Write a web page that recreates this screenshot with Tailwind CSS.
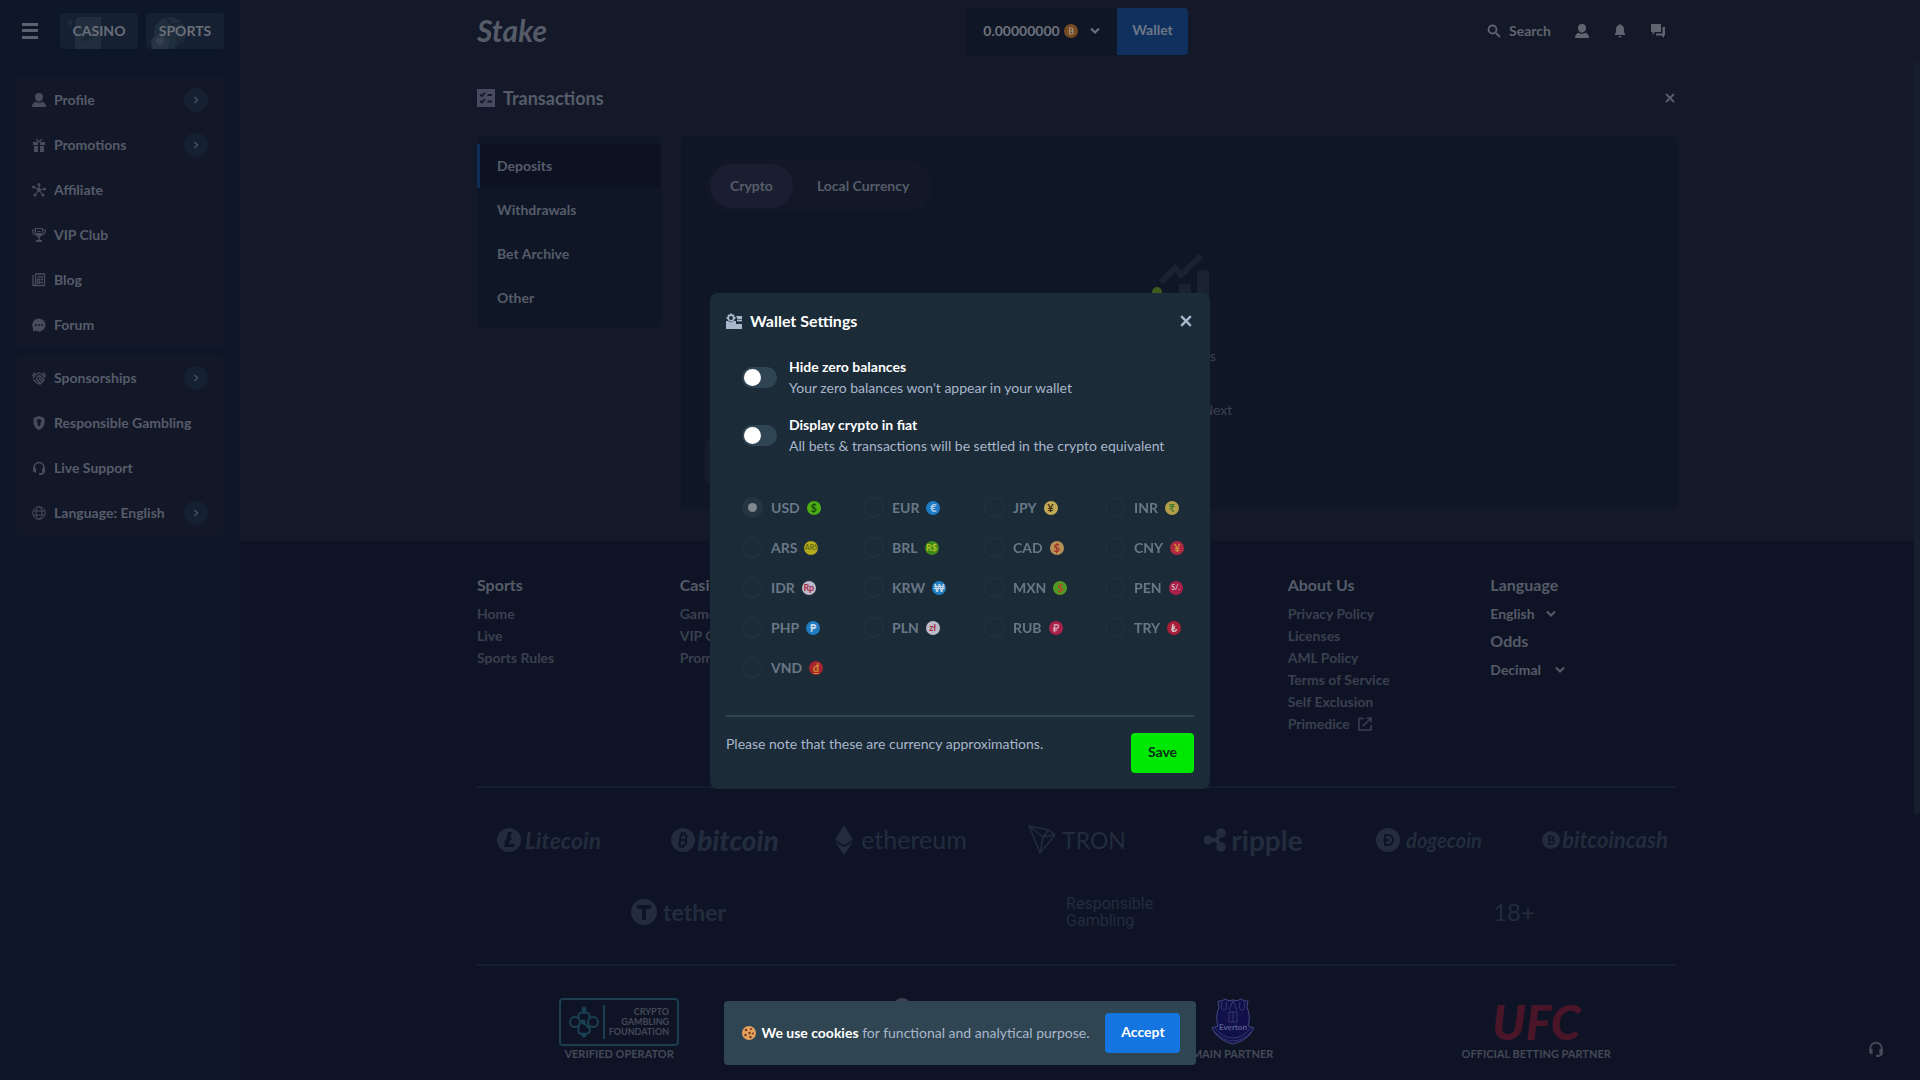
<!DOCTYPE html>
<html lang="en">
<head>
<meta charset="utf-8">
<title>Transactions - Stake</title>
<script src="https://cdn.jsdelivr.net/npm/@tailwindcss/browser@4"></script>
</head>
<body class="h-screen overflow-hidden bg-[#0e1728] font-['Lato',sans-serif] text-sm text-[#565c69]">

<svg class="hidden" aria-hidden="true">
  <symbol id="user" viewBox="0 0 14 14"><path fill="currentColor" d="M7 0a4 4 0 0 1 4 4c0 2-1 4.500-4 4.500S3 6 3 4a4 4 0 0 1 4-4zM0 14c0-3 1.500-4.500 3.500-5.200C5.500 10 8.500 10 10.500 8.800 12.500 9.500 14 11 14 14z"/></symbol>
  <symbol id="chev-r" viewBox="0 0 8 8"><path fill="none" stroke="currentColor" stroke-width="1.500" d="M2.500 1l3 3-3 3"/></symbol>
  <symbol id="chev-d" viewBox="0 0 10 8"><path fill="none" stroke="currentColor" stroke-width="2" d="M1 1.500l4 4 4-4"/></symbol>
  <symbol id="headset" viewBox="0 0 14 14"><path fill="none" stroke="currentColor" stroke-width="1.600" d="M2 9V6.500a5 5 0 0 1 10 0V11c0 1.500-1 2-3.500 2"/><path fill="currentColor" d="M1 7h3v4.500H2.500L1 10zM10 7h3v4l-1.500.500H10zM7 12h3v2H7z"/></symbol>
  <symbol id="cross" viewBox="0 0 10 10"><path fill="none" stroke="currentColor" stroke-width="2" d="M1 1l8 8M9 1L1 9"/></symbol>
</svg>

<div class="flex min-h-screen">
  <aside class="w-60 shrink-0 bg-[#0e1728]">
    <div class="flex h-[61px] items-center gap-2 pl-[22px]">
      <button aria-label="Menu" class="mr-3.5 flex h-4 w-4 flex-col justify-between text-[#5c616e]">
        <span class="h-[3px] w-full bg-current"></span><span class="h-[3px] w-full bg-current"></span><span class="h-[3px] w-full bg-current"></span>
      </button>
      <a href="#" class="relative flex h-9 w-[78px] items-center justify-center overflow-hidden rounded bg-[#152132] font-bold text-[#6a6e79]">
        <svg class="absolute inset-0" width="78" height="36" viewBox="0 0 78 36" aria-hidden="true"><path fill="#222e3e" d="M17 4h24v32H15V10z"/><path fill="#1a2737" d="M22 25c3-4 8-4 11 0l-3 3h-6z"/><path stroke="#253141" stroke-width="1.500" d="M8 8l2 5M12 7l-1 4"/></svg>
        <span class="relative">CASINO</span></a>
      <a href="#" class="relative flex h-9 w-[78px] items-center justify-center overflow-hidden rounded bg-[#152132] font-bold text-[#6a6e79]">
        <svg class="absolute inset-0" width="78" height="36" viewBox="0 0 78 36" aria-hidden="true"><circle cx="24" cy="20" r="16" fill="#202d3d"/><circle cx="14" cy="30" r="9" fill="#283443"/><circle cx="14" cy="28" r="4" fill="#364150"/><path fill="none" stroke="#162333" stroke-width="1.500" d="M20 5l6 7 9-2M30 24l8 12M38 25l-9 10"/></svg>
        <span class="relative">SPORTS</span></a>
    </div>
    <nav class="mt-4 flex flex-col gap-2 px-4 font-bold [&_svg]:text-[#464c5a]">
      <ul class="rounded bg-[#121828] px-4">
        <li><a href="#" class="flex h-[45px] items-center gap-2"><svg class="h-3.5 w-3.5"><use href="#user"/></svg>Profile<span class="ml-auto flex h-6 w-6 items-center justify-center rounded-full bg-[#152131]"><svg class="h-2 w-2"><use href="#chev-r"/></svg></span></a></li>
        <li><a href="#" class="flex h-[45px] items-center gap-2"><svg class="h-3.5 w-3.5" viewBox="0 0 14 14"><path fill="currentColor" d="M1 4h5v3H1zM8 4h5v3H8zM2 8h4v6H2zM8 8h4v6H8z"/><path fill="none" stroke="currentColor" stroke-width="1.300" d="M7 4L4 1M7 4l3-3"/></svg>Promotions<span class="ml-auto flex h-6 w-6 items-center justify-center rounded-full bg-[#152131]"><svg class="h-2 w-2"><use href="#chev-r"/></svg></span></a></li>
        <li><a href="#" class="flex h-[45px] items-center gap-2"><svg class="h-3.5 w-3.5" viewBox="0 0 14 14"><path stroke="currentColor" stroke-width="1.200" d="M7 7V2M7 7l5-1M7 7l4 5M7 7l-4 5M7 7L2 4"/><g fill="currentColor"><circle cx="7" cy="7" r="2"/><circle cx="7" cy="1.500" r="1.500"/><circle cx="12.500" cy="6" r="1.500"/><circle cx="11" cy="12" r="1.500"/><circle cx="3" cy="12" r="1.500"/><circle cx="1.500" cy="4" r="1.500"/></g></svg>Affiliate</a></li>
        <li><a href="#" class="flex h-[45px] items-center gap-2"><svg class="h-3.5 w-3.5" viewBox="0 0 14 14"><path fill="none" stroke="currentColor" stroke-width="1.200" d="M3 2H.700c0 3 1 4.500 3.300 5M11 2h2.300c0 3-1 4.500-3.300 5M5.500 3.500h3"/><path fill="currentColor" d="M3 0h8v1H3zM3.500 5l7 0C10 7.500 9 9 7.700 9.200V12H10v2H4v-2h2.300V9.200C5 9 4 7.500 3.500 5z"/><path fill="none" stroke="currentColor" d="M3.500 1v4M10.500 1v4"/></svg>VIP Club</a></li>
        <li><a href="#" class="flex h-[45px] items-center gap-2"><svg class="h-3.5 w-3.5" viewBox="0 0 14 14"><path fill="none" stroke="currentColor" stroke-width="1.300" d="M3.500 1h9v11.500h-9zM1 2v10.500h3M5.500 4H11M5.500 6.500h2.200v3.500H5.500zM9 6.500h2M9 9.500h2"/></svg>Blog</a></li>
        <li><a href="#" class="flex h-[45px] items-center gap-2"><svg class="h-3.5 w-3.5" viewBox="0 0 14 14"><path fill="currentColor" d="M7 .500a6.500 6.500 0 1 1-3 12.300L1 13.500V10A6.500 6.500 0 0 1 7 .500z"/><g fill="#121828"><circle cx="4" cy="7" r="1"/><circle cx="7" cy="7" r="1"/><circle cx="10" cy="7" r="1"/></g></svg>Forum</a></li>
      </ul>
      <ul class="rounded bg-[#121828] px-4">
        <li><a href="#" class="flex h-[45px] items-center gap-2"><svg class="h-3.5 w-3.5" viewBox="0 0 14 14"><path fill="none" stroke="currentColor" stroke-width="1.300" d="M.500 5L3 1.500M13.500 5L11 1.500M4 3.500l3-1.500 3 1.500 3 3.500M1 7l3-3.500M1.500 8.500l4 4M4 7.500l4 4.500M6.500 6.500l3.500 4M4.500 6.500L7 4.500l2 1.500 3 3-4 4.200-2-.700"/></svg>Sponsorships<span class="ml-auto flex h-6 w-6 items-center justify-center rounded-full bg-[#152131]"><svg class="h-2 w-2"><use href="#chev-r"/></svg></span></a></li>
        <li><a href="#" class="flex h-[45px] items-center gap-2"><svg class="h-3.5 w-3.5" viewBox="0 0 14 14"><path fill="currentColor" fill-rule="evenodd" d="M7 0l5.500 2v4c0 4-2.500 7-5.500 8C4 13 1.500 10 1.500 6V2zM7 3a2.300 2.300 0 0 0-1.200 4.300V10h2.400V7.300A2.300 2.300 0 0 0 7 3z"/></svg>Responsible Gambling</a></li>
        <li><a href="#" class="flex h-[45px] items-center gap-2"><svg class="h-3.5 w-3.5"><use href="#headset"/></svg>Live Support</a></li>
        <li><a href="#" class="flex h-[45px] items-center gap-2"><svg class="h-3.5 w-3.5" viewBox="0 0 14 14"><g fill="none" stroke="currentColor"><circle cx="7" cy="7" r="6.300"/><ellipse cx="7" cy="7" rx="3" ry="6.300"/><path d="M1 5h12M1 9h12"/></g></svg>Language: English<span class="ml-auto flex h-6 w-6 items-center justify-center rounded-full bg-[#152131]"><svg class="h-2 w-2"><use href="#chev-r"/></svg></span></a></li>
      </ul>
    </nav>
  </aside>

  <div class="min-w-0 flex-1 bg-[#0e1425]">
    <div class="bg-[#131928] pr-1.5">
      <header class="mx-auto grid h-[62px] max-w-[1200px] grid-cols-[1fr_auto_1fr] items-center">
        <a href="#" class="pb-0.5 text-3xl font-bold italic text-[#565b68]">Stake</a>
        <div class="flex h-[47px] overflow-hidden rounded">
          <button class="flex w-[151px] items-center justify-center gap-1 bg-[#0f1726] font-bold text-[#6e727c]">0.00000000
            <svg class="h-3.5 w-3.5" viewBox="0 0 14 14"><circle cx="7" cy="7" r="7" fill="#774b22"/><path fill="none" stroke="#a2917f" stroke-width="1.200" d="M5.500 4v6h2.300a1.500 1.500 0 0 0 0-3H5.500h2a1.500 1.500 0 0 0 0-3z"/></svg>
            <svg class="ml-2 h-2 w-2.5"><use href="#chev-d"/></svg></button>
          <button class="w-[71px] bg-[#10315e] pb-0.5 font-bold text-[#6d7788]">Wallet</button>
        </div>
        <div class="flex items-center justify-end pr-3 text-[#5f6470]">
          <button class="flex items-center gap-2 font-bold"><svg class="h-3.5 w-3.5" viewBox="0 0 14 14"><path fill="none" stroke="currentColor" stroke-width="1.800" d="M9 9l4 4"/><circle cx="5.500" cy="5.500" r="4" fill="none" stroke="currentColor" stroke-width="1.800"/></svg>Search</button>
          <button aria-label="Account" class="ml-6"><svg class="h-3.5 w-3.5"><use href="#user"/></svg></button>
          <button aria-label="Notifications" class="ml-6"><svg class="h-3.5 w-3.5" viewBox="0 0 14 14"><path fill="currentColor" d="M7 0a1 1 0 0 1 1 1c2 .500 3 2 3 4.500 0 3 .500 4 1.500 5.500h-11C2.500 9.500 3 8.500 3 5.500 3 3 4 1.500 6 1a1 1 0 0 1 1-1zM5.500 12h3a1.500 1.500 0 0 1-3 0z"/></svg></button>
          <button aria-label="Chat" class="ml-6"><svg class="h-3.5 w-3.5" viewBox="0 0 14 14"><path fill="currentColor" d="M0 0h10v8H4l-2.500 3V8H0zM11.500 3H14v8.500h-1V14l-2.500-2.500H5V9.500h6.500z"/></svg></button>
        </div>
      </header>

      <main class="mx-auto max-w-[1200px] pt-[22px] pb-[33px]">
        <div class="flex h-7 items-center gap-2">
          <svg class="h-[18px] w-[18px]" viewBox="0 0 18 18"><path fill="#474b5f" d="M0 0h18v18H0z"/><path fill="none" stroke="#131928" stroke-width="1.800" d="M3 5.500l2 1.500 3-3.500M3 12l2 1.500 3-3.500M10.500 6H15M10.500 12.500H15"/></svg>
          <h1 class="text-lg font-bold">Transactions</h1>
          <button aria-label="Close page" class="ml-auto p-0.5"><svg class="h-2.5 w-2.5"><use href="#cross"/></svg></button>
        </div>
        <div class="mt-6 flex items-start gap-5">
          <nav class="w-[184px] shrink-0 rounded bg-[#0f1727] py-2 font-bold">
            <a href="#" class="flex h-11 items-center border-l-[3px] border-[#0f2e55] bg-[#0c1222] pl-[17px]">Deposits</a>
            <a href="#" class="flex h-11 items-center pl-5">Withdrawals</a>
            <a href="#" class="flex h-11 items-center pl-5">Bet Archive</a>
            <a href="#" class="flex h-11 items-center pl-5">Other</a>
          </nav>
          <section class="flex min-h-[372px] flex-1 flex-col items-center rounded bg-[#0f1727] px-6 pt-6 pb-5">
            <div class="ml-px flex gap-1 self-start rounded-full bg-[#121827] p-1 font-bold">
              <button class="h-11 rounded-full bg-[#191f30] px-5">Crypto</button>
              <button class="h-11 rounded-full px-5">Local Currency</button>
            </div>
            <svg class="mt-10 h-[72px] w-[68px]" viewBox="0 0 68 72" aria-hidden="true"><path fill="none" stroke="#1b2332" stroke-width="6" d="M16 30l14-14 6 7L56 4"/><path fill="#1a2231" d="M52 20q6-5 12 0v52H52zM34 32h12v40H34z"/><circle cx="12" cy="40" r="5" fill="#3c5a1e"/></svg>
            <p class="mt-[22px] text-[#3a404e]">No deposits</p>
            <div class="mt-[34px] flex gap-6 text-[#3a404e]"><button>Previous</button><button>Next</button></div>
            <button aria-label="Statistics" class="mt-5 h-11 w-11 self-start rounded bg-[#151c2c]"></button>
          </section>
        </div>
      </main>
    </div>

    <footer class="pr-1.5">
      <div class="mx-auto max-w-[1200px] pt-8">
        <div class="grid grid-cols-6 gap-4 font-bold leading-[22px] text-[#3a404f]">
          <div class="flex flex-col items-start"><h2 class="mb-1.5 text-base text-[#565b68]">Sports</h2><a href="#">Home</a><a href="#">Live</a><a href="#">Sports Rules</a></div>
          <div class="flex flex-col items-start"><h2 class="mb-1.5 text-base text-[#565b68]">Casino</h2><a href="#">Games</a><a href="#">VIP Club</a><a href="#">Promotions</a></div>
          <div class="col-start-5 flex flex-col items-start"><h2 class="mb-1.5 text-base text-[#565b68]">About Us</h2><a href="#">Privacy Policy</a><a href="#">Licenses</a><a href="#">AML Policy</a><a href="#">Terms of Service</a><a href="#">Self Exclusion</a><a href="#" class="flex items-center gap-2">Primedice <svg class="h-3.5 w-3.5" viewBox="0 0 14 14"><path fill="none" stroke="currentColor" stroke-width="1.500" d="M6 1.500H1v11.500h12V8M5 9l8-8M8.500 1H13v4.500"/></svg></a></div>
          <div class="flex flex-col items-start text-[#565b68]">
            <h2 class="mb-1.5 text-base">Language</h2>
            <span class="flex items-center"><select aria-label="Language" class="w-[56px] appearance-none bg-transparent font-bold"><option>English</option></select><svg class="h-2 w-2.5"><use href="#chev-d"/></svg></span>
            <h2 class="mt-1 mb-1.5 text-base">Odds</h2>
            <span class="flex items-center"><select aria-label="Odds" class="w-[65px] appearance-none bg-transparent font-bold"><option>Decimal</option></select><svg class="h-2 w-2.5"><use href="#chev-d"/></svg></span>
          </div>
        </div>
        <hr class="mt-[51px] border-t-2 border-[#151e2d]">

        <div class="-mx-4 mt-8 grid grid-cols-7 text-[#222c3d]">
          <div class="flex h-10 items-center justify-center gap-1 text-[23px] font-bold italic"><svg class="h-6 w-6 shrink-0" viewBox="0 0 24 24"><circle cx="12" cy="12" r="12" fill="currentColor"/><path fill="#0e1425" d="M11 4h4l-2 7 2-1-.500 2-2 1-.700 3H18l-1 3H7l1.500-5-1.500.700.500-2 1.500-.700z"/></svg>Litecoin</div>
          <div class="flex h-10 items-center justify-center gap-0.5 text-[28px] font-black italic"><svg class="h-6 w-6 shrink-0" viewBox="0 0 24 24"><circle cx="12" cy="12" r="12" fill="currentColor"/><path fill="none" stroke="#0e1425" stroke-width="2" d="M10 6l-2 12M9 7h4.500q3 .5 2 3t-4 2H9h3.500q3.500 0 2.500 3t-4 2.500H8M11 4v3M14 4v3M9 17v3M12 17v3"/></svg>bitcoin</div>
          <div class="flex h-10 items-center justify-center gap-2 text-[25px]"><svg class="h-[30px] w-[18px] shrink-0" viewBox="0 0 18 30"><path fill="currentColor" d="M9 0l9 15-9 5-9-5zM0 17l9 5 9-5-9 13z"/></svg>ethereum</div>
          <div class="flex h-10 items-center justify-center gap-1.5 text-[23px]"><svg class="h-[30px] w-7 shrink-0" viewBox="0 0 28 30"><path fill="none" stroke="currentColor" stroke-width="1.400" d="M1 1l20 4 6 5-15 18zM1 1l14 11L12 28M15 12l12-2M15 12l6-7"/></svg>TRON</div>
          <div class="flex h-10 items-center justify-center gap-1 text-[28px] font-bold leading-9"><svg class="h-6 w-6 shrink-0" viewBox="0 0 24 24"><g fill="currentColor"><circle cx="5" cy="12" r="4.500"/><circle cx="18" cy="5" r="4.800"/><circle cx="18" cy="19" r="4.800"/></g><path fill="none" stroke="currentColor" stroke-width="4" d="M5 12h7q3 0 5-7M12 12q3 0 5 7"/></svg>ripple</div>
          <div class="flex h-10 items-center justify-center gap-1.5 text-xl font-bold italic"><svg class="h-6 w-6 shrink-0" viewBox="0 0 24 24"><circle cx="12" cy="12" r="12" fill="currentColor"/><path fill="none" stroke="#0e1425" stroke-width="2" d="M9 7h3a5 5 0 0 1 0 10H9zM7 12h6"/></svg>dogecoin</div>
          <div class="flex h-10 items-center justify-center gap-0.5 text-[22px] font-bold italic"><svg class="h-[18px] w-[18px] shrink-0" viewBox="0 0 24 24"><circle cx="12" cy="12" r="12" fill="currentColor"/><path fill="none" stroke="#0e1425" stroke-width="2" d="M9 6l1 12M8 7h5q3 .5 2 3t-4 2H9h4.500q3.500 0 2.500 3t-4 2.500H8"/></svg>bitcoincash</div>
        </div>
        <div class="-mr-7 -ml-4 mt-8 flex items-center justify-around text-[#222c3d]">
          <div class="flex h-10 items-center gap-1.5 text-[23px] font-bold"><svg class="h-[26px] w-[26px]" viewBox="0 0 26 26"><circle cx="13" cy="13" r="13" fill="currentColor"/><path fill="#0e1425" d="M6 6h14v4h-5v11h-4V10H6z"/></svg>tether</div>
          <div class="font-['Roboto',sans-serif] text-base leading-[17px]"><span class="block">Responsible</span><span class="block">Gambling</span></div>
          <div class="text-2xl">18+</div>
        </div>
        <hr class="mt-8 border-t-2 border-[#151e2d]">
        <div class="-mr-7 -ml-3 mt-8 flex justify-around text-[11px] font-bold leading-4 text-[#444957]">
          <div class="flex flex-col items-center">
            <div class="flex h-12 w-[120px] items-center justify-between rounded-sm border-2 border-[#1b3f50] px-2">
              <svg class="h-8 w-[30px]" viewBox="0 0 30 32"><g fill="none" stroke="#1b4152" stroke-width="2"><circle cx="6" cy="16" r="5"/><circle cx="24" cy="16" r="5"/><path d="M10 12c-4-8 14-8 10 0M10 20c-2 7 0 8 5 8 6 0 7-3 5-8M15 4v4M13 15l8 8"/></g><g fill="#1b4152"><circle cx="15" cy="3" r="2.500"/><circle cx="14" cy="16" r="2.500"/><circle cx="15" cy="29" r="2.500"/></g></svg>
              <span class="h-[34px] w-0.5 bg-[#1b3f50]"></span>
              <span class="text-right text-[9px] leading-[10px]">CRYPTO<br>GAMBLING<br>FOUNDATION</span>
            </div>VERIFIED OPERATOR
          </div>
          <div class="w-[136px]"><svg class="ml-[25px] h-12 w-5" viewBox="0 0 20 48" aria-hidden="true"><circle cx="10" cy="10" r="10" fill="#3d4350"/></svg></div>
          <div class="flex flex-col items-center">
            <svg class="h-12 w-12" viewBox="0 0 48 48" role="img" aria-label="Everton"><path fill="#11104a" stroke="#454a80" d="M9 3q4 1 7-2 4 3 8 1 4 2 8-1 3 3 7 2l-1 6q4 10 1 19l6 2-3 5Q36 43 24 46 12 43 6 35l-3-5 6-2Q6 19 10 9z"/><path fill="none" stroke="#34396c" d="M13 4q-2 8 2 8t2-8M31 4q-2 8 2 8t2-8M20 12l4-9 4 9M20 24V14h8v10zM24 14v10M6 30q8 10 18 10t18-10M5 33q9 10 19 10t19-10"/><text x="24" y="32" text-anchor="middle" font-size="8" font-family="Lato" fill="#5a5f92">Everton</text></svg>
            MAIN PARTNER
          </div>
          <div class="flex flex-col items-center"><span class="flex h-12 items-center text-[48px] font-black italic leading-none text-[#4a1528]">UFC</span><span>OFFICIAL BETTING PARTNER</span></div>
        </div>
      </div>
    </footer>
  </div>
</div>

<div class="fixed top-[62px] right-0 h-[753px] w-1.5 rounded-full bg-[#171e2c]"></div>
<button aria-label="Support chat" class="fixed right-9 bottom-[23px] text-[#444b58]"><svg class="h-4 w-4"><use href="#headset"/></svg></button>

<div class="fixed inset-0 flex items-center justify-center pt-0.5">
  <div role="dialog" aria-labelledby="ws-title" class="w-[500px] rounded-lg bg-[#1b2b37] p-4 text-[#a9b6cb]">
    <div class="flex h-6 items-center gap-2">
      <svg class="h-4 w-4" viewBox="0 0 16 16"><path fill="currentColor" d="M0 8h2.500a3 3 0 0 0 5 0H10v3h6v5H0zM10 3h6v3h-4.500z"/><path fill="none" stroke="currentColor" stroke-width="1.800" d="M11 7.500h5"/><circle cx="5" cy="5" r="2.800" fill="none" stroke="currentColor" stroke-width="1.800"/><path stroke="currentColor" stroke-width="1.800" d="M5 .500V2M.500 5H2M8 5h1.500M2 2l1 1M8 2L7 3"/></svg>
      <h2 id="ws-title" class="text-base font-bold text-white">Wallet Settings</h2>
      <button aria-label="Close" class="ml-auto mr-0.5"><svg class="h-3 w-3"><use href="#cross"/></svg></button>
    </div>
    <div class="mt-[23px] flex flex-col gap-4 pl-4">
      <div class="flex items-center gap-3">
        <input type="checkbox" id="hide-zero" aria-describedby="hide-zero-d" class="h-[21px] w-[35px] shrink-0 appearance-none rounded-full bg-[#2f4553] p-[2px] before:block before:h-[17px] before:w-[17px] before:rounded-full before:bg-white">
        <div class="leading-[21px]"><label for="hide-zero" class="block font-bold text-white">Hide zero balances</label><p id="hide-zero-d">Your zero balances won't appear in your wallet</p></div>
      </div>
      <div class="flex items-center gap-3">
        <input type="checkbox" id="fiat" aria-describedby="fiat-d" class="h-[21px] w-[35px] shrink-0 appearance-none rounded-full bg-[#2f4553] p-[2px] before:block before:h-[17px] before:w-[17px] before:rounded-full before:bg-white">
        <div class="leading-[21px]"><label for="fiat" class="block font-bold text-white">Display crypto in fiat</label><p id="fiat-d">All bets &amp; transactions will be settled in the crypto equivalent</p></div>
      </div>
    </div>
    <fieldset id="currencies" class="mt-[41px] grid grid-cols-[repeat(4,121px)] gap-y-[19px] pl-4" aria-label="Fiat currency"></fieldset>
    <hr class="mt-[37px] border-t-2 border-[#2f4553]">
    <div class="mt-4 flex items-start justify-between">
      <p class="leading-[21px]">Please note that these are currency approximations.</p>
      <button class="h-10 w-[63px] rounded bg-[#00e701] pb-0.5 font-bold text-[#05301a]">Save</button>
    </div>
  </div>
</div>

<div class="fixed inset-x-0 bottom-[15px] flex justify-center">
  <div class="flex h-16 items-center rounded bg-[#304552] pr-4 pl-[18px] text-[#a9b6cb]">
    <svg class="mr-1.5 h-3.5 w-3.5" viewBox="0 0 14 14" aria-hidden="true"><circle cx="7" cy="7" r="7" fill="#e5a15c"/><g fill="#6b3322"><circle cx="4" cy="4" r="1.200"/><circle cx="9" cy="3" r="1"/><circle cx="7.500" cy="7" r="1.200"/><circle cx="11" cy="7.500" r="1"/><circle cx="3.500" cy="9" r="1.200"/><circle cx="8.500" cy="11" r="1.200"/></g></svg>
    <p><strong class="text-white">We use cookies</strong> for functional and analytical purpose.</p>
    <button class="ml-4 h-10 w-[75px] rounded bg-[#1475e1] pb-0.5 font-bold text-white">Accept</button>
  </div>
</div>

<script>
const currencies = [
  ['USD','$','#4fae13','#134a0c'],['EUR','€','#1d7ac4','#b5cde0'],['JPY','¥','#c2aa52','#3f2f14'],['INR','₹','#b3a049','#3f7a30'],
  ['ARS','ARS','#b5aa1d','#5b6b18'],['BRL','R$','#3d8a1c','#b5c022'],['CAD','$','#b88f55','#a02b22'],['CNY','¥','#b22840','#d18f3b'],
  ['IDR','Rp','#bcbcc8','#a8294a'],['KRW','₩','#1f7fc0','#c9d9e4'],['MXN','$','#4f9a22','#b5482c'],['PEN','S/.','#aa2048','#d3c2cb'],
  ['PHP','₱','#1f7bc0','#c9d9e4'],['PLN','zł','#bcbcc8','#a8294a'],['RUB','₽','#aa2048','#d3a3b0'],['TRY','₺','#aa2038','#d3c2cb'],
  ['VND','₫','#a82430','#c98a2c']
];
document.getElementById('currencies').innerHTML = currencies.map(([code, sign, bg, fg], i) => `
  <label class="flex h-[21px] items-center text-[#697887]">
    <input type="radio" name="currency" disabled ${i ? '' : 'checked'} class="mr-2 flex h-[21px] w-[21px] appearance-none items-center justify-center rounded-full border-2 border-[#20313d] before:block before:h-[9px] before:w-[9px] before:rounded-full checked:border-[#253541] checked:bg-[#253541] checked:before:bg-[#7d8890]">
    <span class="mr-[7px] font-bold">${code}</span>
    <span aria-hidden="true" class="flex h-3.5 w-3.5 items-center justify-center overflow-hidden rounded-full font-bold leading-none ${sign.length > 2 ? 'text-[7px]' : sign.length > 1 ? 'text-[9px]' : 'text-[11px]'}" style="background:${bg};color:${fg}">${sign}</span>
  </label>`).join('');
</script>
</body>
</html>
